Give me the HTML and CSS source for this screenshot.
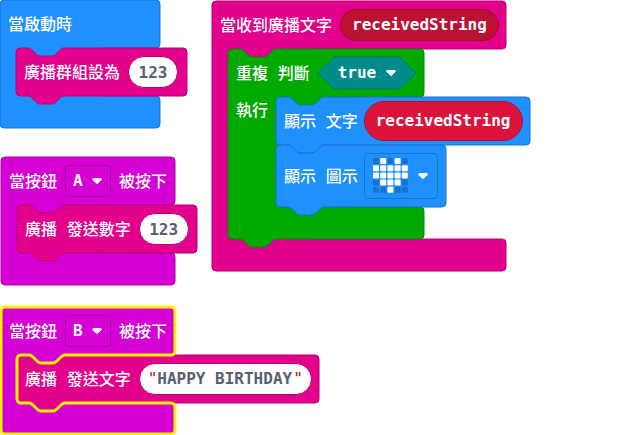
FILE: index.html
```html
<!DOCTYPE html>
<html lang="zh-Hant">
<head>
<meta charset="utf-8">
<meta name="viewport" content="width=device-width, initial-scale=1">
<title>積木程式</title>
<link rel="stylesheet" href="styles.css">
</head>
<body>
<svg class="defs" aria-hidden="true">
  <symbol id="caret" viewBox="0 0 12 8"><path d="M2 1.500h8q.8.500.2 1.200L6.700 6.200q-.7.600-1.400 0L1.800 2.700q-.6-.7.200-1.200z" fill="#fff" stroke="#fff" stroke-linejoin="round"/></symbol>
</svg>
<main class="workspace">

  <section class="stack stack-start">
    <svg class="shape blue" aria-hidden="true"><path d="M4 0H156a4 4 0 0 1 4 4V44a4 4 0 0 1-4 4H100V96H156a4 4 0 0 1 4 4V124a4 4 0 0 1-4 4H4a4 4 0 0 1-4-4V4a4 4 0 0 1 4-4z"/></svg>
    <div class="row"><span class="text">當啟動時</span></div>
    <div class="mouth">
      <div class="block">
        <svg class="shape pink" aria-hidden="true"><path d="M0 4a4 4 0 0 1 4-4H12c2 0 3 1 4 2l4 4c1 1 2 2 4 2h12c2 0 3-1 4-2l4-4c1-1 2-2 4-2H167a4 4 0 0 1 4 4V44a4 4 0 0 1-4 4H48c-2 0-3 1-4 2l-4 4c-1 1-2 2-4 2h-12c-2 0-3-1-4-2l-4-4c-1-1-2-2-4-2H4a4 4 0 0 1-4-4z"/></svg>
        <div class="row"><label class="text" for="group">廣播群組設為</label><input class="number" id="group" value="123"></div>
      </div>
    </div>
    <div class="foot"></div>
  </section>

  <section class="stack stack-a">
    <svg class="shape purple" aria-hidden="true"><path d="M4 0H170a4 4 0 0 1 4 4V44a4 4 0 0 1-4 4H100V96H170a4 4 0 0 1 4 4V124a4 4 0 0 1-4 4H4a4 4 0 0 1-4-4V4a4 4 0 0 1 4-4z"/></svg>
    <div class="row">
      <label class="text" for="button-a">當按鈕</label>
      <span class="dropdown"><select id="button-a"><option>A</option></select><svg class="caret" aria-hidden="true"><use href="#caret"/></svg></span>
      <span class="text">被按下</span>
    </div>
    <div class="mouth">
      <div class="block">
        <svg class="shape pink" aria-hidden="true"><path d="M0 4a4 4 0 0 1 4-4H12c2 0 3 1 4 2l4 4c1 1 2 2 4 2h12c2 0 3-1 4-2l4-4c1-1 2-2 4-2H176a4 4 0 0 1 4 4V44a4 4 0 0 1-4 4H48c-2 0-3 1-4 2l-4 4c-1 1-2 2-4 2h-12c-2 0-3-1-4-2l-4-4c-1-1-2-2-4-2H4a4 4 0 0 1-4-4z"/></svg>
        <div class="row"><label class="text" for="send-number">廣播 發送數字</label><input class="number" id="send-number" value="123"></div>
      </div>
    </div>
    <div class="foot"></div>
  </section>

  <section class="stack stack-b">
    <svg class="shape purple" aria-hidden="true"><path d="M4 0H170a4 4 0 0 1 4 4V44a4 4 0 0 1-4 4H100V96H170a4 4 0 0 1 4 4V123a4 4 0 0 1-4 4H4a4 4 0 0 1-4-4V4a4 4 0 0 1 4-4z"/></svg>
    <div class="row">
      <label class="text" for="button-b">當按鈕</label>
      <span class="dropdown"><select id="button-b"><option>B</option></select><svg class="caret" aria-hidden="true"><use href="#caret"/></svg></span>
      <span class="text">被按下</span>
    </div>
    <div class="mouth">
      <div class="block">
        <svg class="shape pink" aria-hidden="true"><path d="M0 4a4 4 0 0 1 4-4H12c2 0 3 1 4 2l4 4c1 1 2 2 4 2h12c2 0 3-1 4-2l4-4c1-1 2-2 4-2H298a4 4 0 0 1 4 4V44a4 4 0 0 1-4 4H48c-2 0-3 1-4 2l-4 4c-1 1-2 2-4 2h-12c-2 0-3-1-4-2l-4-4c-1-1-2-2-4-2H4a4 4 0 0 1-4-4z"/></svg>
        <div class="row"><label class="text" for="send-text">廣播 發送文字</label><span class="string"><span class="quote">"</span><input id="send-text" value="HAPPY BIRTHDAY"><span class="quote">"</span></span></div>
      </div>
    </div>
    <div class="foot"></div>
    <svg class="shape outline" aria-hidden="true"><path d="M4 0H170a4 4 0 0 1 4 4V44a4 4 0 0 1-4 4H64c-2 0-3 1-4 2l-4 4c-1 1-2 2-4 2h-12c-2 0-3-1-4-2l-4-4c-1-1-2-2-4-2H20a4 4 0 0 0-4 4V92a4 4 0 0 0 4 4H28c2 0 3 1 4 2l4 4c1 1 2 2 4 2h12c2 0 3-1 4-2l4-4c1-1 2-2 4-2H170a4 4 0 0 1 4 4V123a4 4 0 0 1-4 4H4a4 4 0 0 1-4-4V4a4 4 0 0 1 4-4z"/></svg>
  </section>

  <section class="stack stack-received">
    <svg class="shape pink" aria-hidden="true"><path d="M4 0H290a4 4 0 0 1 4 4V44a4 4 0 0 1-4 4H100V238H290a4 4 0 0 1 4 4V266a4 4 0 0 1-4 4H4a4 4 0 0 1-4-4V4a4 4 0 0 1 4-4z"/></svg>
    <div class="row"><span class="text">當收到廣播文字</span><span class="value value-param">receivedString</span></div>
    <div class="mouth">
      <div class="block">
        <svg class="shape green" aria-hidden="true"><path d="M0 4a4 4 0 0 1 4-4H12c2 0 3 1 4 2l4 4c1 1 2 2 4 2h12c2 0 3-1 4-2l4-4c1-1 2-2 4-2H192a4 4 0 0 1 4 4V44a4 4 0 0 1-4 4H120V158H192a4 4 0 0 1 4 4V186a4 4 0 0 1-4 4H48c-2 0-3 1-4 2l-4 4c-1 1-2 2-4 2h-12c-2 0-3-1-4-2l-4-4c-1-1-2-2-4-2H4a4 4 0 0 1-4-4z"/></svg>
        <div class="row">
          <label class="text" for="condition">重複 判斷</label>
          <span class="dropdown condition"><svg class="shape teal" aria-hidden="true"><path d="M16 0H82L98 16L82 32H16L0 16z"/></svg><select id="condition"><option>true</option></select><svg class="caret" aria-hidden="true"><use href="#caret"/></svg></span>
        </div>
        <div class="loop">
          <span class="text loop-label">執行</span>
          <div class="loop-body">
            <div class="block">
              <svg class="shape blue" aria-hidden="true"><path d="M0 4a4 4 0 0 1 4-4H12c2 0 3 1 4 2l4 4c1 1 2 2 4 2h12c2 0 3-1 4-2l4-4c1-1 2-2 4-2H250a4 4 0 0 1 4 4V44a4 4 0 0 1-4 4H48c-2 0-3 1-4 2l-4 4c-1 1-2 2-4 2h-12c-2 0-3-1-4-2l-4-4c-1-1-2-2-4-2H4a4 4 0 0 1-4-4z"/></svg>
              <div class="row row-tight"><span class="text">顯示 文字</span><span class="value value-variable">receivedString</span></div>
            </div>
            <div class="block">
              <svg class="shape blue" aria-hidden="true"><path d="M0 4a4 4 0 0 1 4-4H12c2 0 3 1 4 2l4 4c1 1 2 2 4 2h12c2 0 3-1 4-2l4-4c1-1 2-2 4-2H166a4 4 0 0 1 4 4V58a4 4 0 0 1-4 4H48c-2 0-3 1-4 2l-4 4c-1 1-2 2-4 2h-12c-2 0-3-1-4-2l-4-4c-1-1-2-2-4-2H4a4 4 0 0 1-4-4z"/></svg>
              <div class="row row-tight row-tall">
                <span class="text" id="icon-label">顯示 圖示</span>
                <button class="icon-field" type="button" aria-labelledby="icon-label">
                  <svg class="leds" viewBox="0 0 36 36" aria-hidden="true">
                    <g fill="#1873cc"><rect x="0" y="0" width="6" height="6" rx="1"/><rect x="14.400" y="0" width="6" height="6" rx="1"/><rect x="28.800" y="0" width="6" height="6" rx="1"/><rect x="0" y="21.600" width="6" height="6" rx="1"/><rect x="28.800" y="21.600" width="6" height="6" rx="1"/><rect x="0" y="28.800" width="6" height="6" rx="1"/><rect x="7.200" y="28.800" width="6" height="6" rx="1"/><rect x="21.600" y="28.800" width="6" height="6" rx="1"/><rect x="28.800" y="28.800" width="6" height="6" rx="1"/></g>
                    <g fill="#fff"><rect x="7.200" y="0" width="6" height="6" rx="1"/><rect x="21.600" y="0" width="6" height="6" rx="1"/><rect x="0" y="7.200" width="6" height="6" rx="1"/><rect x="7.200" y="7.200" width="6" height="6" rx="1"/><rect x="14.400" y="7.200" width="6" height="6" rx="1"/><rect x="21.600" y="7.200" width="6" height="6" rx="1"/><rect x="28.800" y="7.200" width="6" height="6" rx="1"/><rect x="0" y="14.400" width="6" height="6" rx="1"/><rect x="7.200" y="14.400" width="6" height="6" rx="1"/><rect x="14.400" y="14.400" width="6" height="6" rx="1"/><rect x="21.600" y="14.400" width="6" height="6" rx="1"/><rect x="28.800" y="14.400" width="6" height="6" rx="1"/><rect x="7.200" y="21.600" width="6" height="6" rx="1"/><rect x="14.400" y="21.600" width="6" height="6" rx="1"/><rect x="21.600" y="21.600" width="6" height="6" rx="1"/><rect x="14.400" y="28.800" width="6" height="6" rx="1"/></g>
                  </svg>
                  <svg class="caret-inline" aria-hidden="true"><use href="#caret"/></svg>
                </button>
              </div>
            </div>
          </div>
        </div>
        <div class="foot"></div>
      </div>
    </div>
    <div class="foot"></div>
  </section>

</main>
</body>
</html>
```
FILE: styles.css
```css
* {
  box-sizing: border-box;
}

body {
  margin: 0;
  background: #fff;
}

body,
input,
select {
  font-family: "DejaVu Sans Mono", "Noto Sans CJK TC", monospace;
  font-size: 16px;
  font-weight: 500;
  line-height: 24px;
}

.defs {
  position: absolute;
  width: 0;
  height: 0;
}

/* Free canvas that holds the block stacks */
.workspace {
  position: relative;
  min-height: 100vh;
  overflow: hidden;
  color: #fff;
}

.stack {
  position: absolute;
  white-space: nowrap;
}

.stack-start { left: 0; top: 0; }
.stack-a { left: 1px; top: 157px; }
.stack-b { left: 1px; top: 307px; }
.stack-received { left: 212px; top: 1px; }

/* Block outlines, drawn behind the fields */
.shape {
  position: absolute;
  left: 0;
  top: 0;
  width: 100%;
  height: 100%;
  overflow: visible;
  pointer-events: none;
}

.blue { fill: #1e90ff; stroke: #1873cc; }
.pink { fill: #e3008c; stroke: #b60070; }
.purple { fill: #d400d4; stroke: #aa00aa; }
.green { fill: #00aa00; stroke: #008800; }
.teal { fill: #008b8b; stroke: #006f6f; }
.outline { fill: none; stroke: #fff200; stroke-width: 3px; }

.block {
  position: relative;
  width: max-content;
}

.row {
  position: relative;
  display: flex;
  align-items: center;
  gap: 8px;
  width: max-content;
  height: 48px;
  padding: 0 8px;
}

.row-tight { gap: 6px; }
.row-tall { height: 62px; }

.text {
  padding-top: 2px;
}

.mouth {
  margin-left: 16px;
}

.foot {
  height: 32px;
}

.loop {
  display: grid;
  grid-template-columns: 48px max-content;
  position: relative;
}

.loop-label {
  padding-left: 8px;
}

/* Fields */
input,
select,
.value {
  font-weight: 700;
}

input {
  padding: 0;
  border: 0;
  outline: 0;
  color: #575e75;
  background: #fff;
}

.number {
  width: 50px;
  height: 32px;
  border: 1px solid #b60070;
  border-radius: 16px;
  text-align: center;
}

.string {
  display: flex;
  align-items: center;
  height: 32px;
  padding: 0 8px;
  border: 1px solid #b60070;
  border-radius: 16px;
  background: #fff;
}

.string input {
  width: 136px;
}

.quote {
  color: #a31515;
}

.dropdown {
  position: relative;
  display: block;
}

select {
  display: block;
  appearance: none;
  width: 46px;
  height: 32px;
  margin: 0;
  padding: 0 7px;
  border: 1px solid #aa00aa;
  border-radius: 4px;
  outline: 0;
  color: #fff;
  background: transparent;
}

.condition select {
  position: relative;
  width: 98px;
  padding: 0 19px;
  border-color: transparent;
}

.caret {
  position: absolute;
  right: 8px;
  top: 12px;
  width: 12px;
  height: 8px;
  pointer-events: none;
}

.condition .caret {
  right: 19px;
}

.caret-inline {
  width: 12px;
  height: 8px;
}

.value {
  display: flex;
  align-items: center;
  padding: 0 11px;
  border: 1px solid #b01030;
}

.value-param {
  height: 32px;
  border-radius: 16px;
  border-color: #9c0e2a;
  background: #bb1133;
}

.value-variable {
  height: 40px;
  border-radius: 20px;
  background: #dc143c;
}

.icon-field {
  display: flex;
  align-items: center;
  gap: 8px;
  height: 46px;
  padding: 0 8px;
  border: 1px solid #1873cc;
  border-radius: 4px;
  background: transparent;
}

.leds {
  width: 36px;
  height: 36px;
}
```
